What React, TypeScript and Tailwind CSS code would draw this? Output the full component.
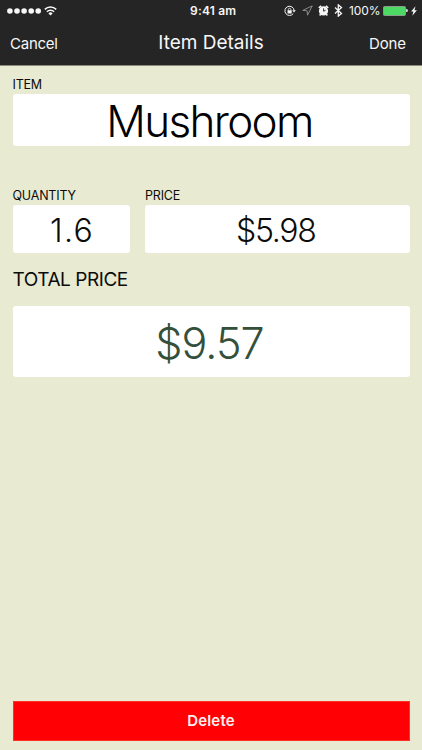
import React from 'react';

type FieldProps = {
  label: string;
  value: string;
  className?: string;
  boxClassName: string;
};

const Field: React.FC<FieldProps> = ({ label, value, className = '', boxClassName }) => {
  return (
    <div className={className}>
      <div className="pt-px pb-px text-[12.5px] leading-4 tracking-[-0.2px]">{label}</div>
      <div className={`flex items-center justify-center rounded-[3px] bg-white font-light ${boxClassName}`}>
        <span>{value}</span>
      </div>
    </div>
  );
};

const StatusBar: React.FC = () => {
  return (
    <div className="relative flex h-[21px] items-center justify-between pl-[7px] pr-[5px]">
      {/* Signal and wifi */}
      <div className="flex items-center">
        <svg width="34" height="6" viewBox="0 0 34 6" fill="currentColor">
          <circle cx="2.9" cy="3" r="2.8" />
          <circle cx="10" cy="3" r="2.8" />
          <circle cx="17.1" cy="3" r="2.8" />
          <circle cx="24.2" cy="3" r="2.8" />
          <circle cx="31.2" cy="3" r="2.8" />
        </svg>
        <svg className="ml-[3px]" width="13" height="10" viewBox="0 0 13 10" fill="none" stroke="currentColor">
          <path d="M.8 3.4a8.1 8.1 0 0 1 11.4 0" strokeWidth="1.6" />
          <path d="M2.9 5.7a5.1 5.1 0 0 1 7.2 0" strokeWidth="1.6" />
          <path d="M6.5 9.6 4.4 7.4a2.9 2.9 0 0 1 4.2 0Z" fill="currentColor" stroke="none" />
        </svg>
      </div>

      <span className="absolute left-[190px] top-[3px] whitespace-nowrap text-[12px] font-semibold leading-4 tracking-[0.2px]">
        9:41 am
      </span>

      <div className="flex items-center">
        {/* Rotation lock */}
        <svg width="12" height="12" viewBox="0 0 12 12" fill="none" stroke="currentColor">
          <path d="M9.2 8.6a4.6 4.6 0 1 1 .9-3.2" strokeWidth="1" />
          <path d="m8.2 5.2 1.8 2.2 1.8-2.2Z" fill="currentColor" stroke="none" />
          <rect x="3.5" y="5.3" width="4.2" height="3.2" rx=".3" fill="currentColor" stroke="none" />
          <path d="M4.3 5.5V4.6a1.3 1.3 0 0 1 2.6 0v.9" strokeWidth=".8" />
        </svg>
        {/* Location */}
        <svg className="ml-[6px]" width="11" height="11" viewBox="0 0 10 10" fill="none" stroke="#999" strokeWidth=".8">
          <path d="M9.3.8.7 4.9l4 .4.3 4Z" />
        </svg>
        {/* Alarm */}
        <svg className="ml-[5px]" width="11" height="11" viewBox="0 0 11 11">
          <circle cx="5.5" cy="5.9" r="4.6" fill="currentColor" />
          <path d="M.8 2.9 3.2.9M10.2 2.9 7.8.9M2.6 9.2l-.9 1.2M8.4 9.2l.9 1.2" stroke="currentColor" strokeWidth="1.6" />
          <path d="M5.6 3.3v2.9l2-.9" fill="none" stroke="#252525" strokeWidth=".9" />
        </svg>
        {/* Bluetooth */}
        <svg className="ml-[5px]" width="9" height="13" viewBox="0 0 9 13" fill="none" stroke="currentColor" strokeWidth="1.3">
          <path d="m1 3.6 6.5 5.8-3.2 2.7V.9l3.2 2.7L1 9.4" />
        </svg>
        <span className="ml-[6px] w-[34px] whitespace-nowrap text-[12px] leading-4 tracking-[-0.1px]">100%</span>
        {/* Battery */}
        <div className="h-[10px] w-[23px] rounded-[1.5px] border border-[#8b9b8d] bg-[#4cd964]" />
        <div className="h-[3px] w-[2px] rounded-r-full bg-gray-300" />
        <svg className="ml-[3px]" width="6" height="10" viewBox="0 0 6 10" fill="currentColor">
          <path d="M4.5.3.1 5.5h2.3L1.3 9.7 5.9 4.2H3.5Z" />
        </svg>
      </div>
    </div>
  );
};

const App: React.FC = () => {
  return (
    <div className="flex h-[750px] w-[422px] flex-col overflow-hidden bg-[#e8ead2] font-['Inter',sans-serif] text-[#0c0c0a]">
      <header className="h-[66px] flex-none border-b border-[#8a8a80] bg-[#252525] text-[#f7f7f7]">
        <StatusBar />
        {/* Navbar */}
        <nav className="grid h-[44px] grid-cols-[1fr_auto_1fr] items-center pl-[10px] pr-[16px]">
          <button className="pt-[2px] text-left text-[15px] tracking-[-0.25px]">Cancel</button>
          <h1 className="pl-[6px] text-[19px] leading-6">Item Details</h1>
          <button className="pt-[2px] text-right text-[15px] tracking-[-0.1px]">Done</button>
        </nav>
      </header>

      <main className="flex flex-1 flex-col px-[12.5px] pb-[9.5px] pt-[10px]">
        <Field
          label="ITEM"
          value="Mushroom"
          boxClassName="h-[52px] pt-[3px] pr-[3px] text-[44px] leading-[49px] tracking-[-1.65px] text-black"
        />
        <div className="mt-[41px] flex gap-[15.5px]">
          <Field
            label="QUANTITY"
            value="1.6"
            className="w-[117px]"
            boxClassName="h-[48px] pt-[4px] pl-[2px] text-[32px] leading-[44px] tracking-[1.3px]"
          />
          <Field
            label="PRICE"
            value="$5.98"
            className="flex-1"
            boxClassName="h-[48px] pt-[4px] pr-[3px] text-[32px] leading-[44px] tracking-[-1.3px]"
          />
        </div>

        <h2 className="mt-[15px] text-[19px] leading-6 tracking-[-0.45px]">TOTAL PRICE</h2>
        <div className="mt-[14px] flex h-[71px] items-center justify-center rounded-[3px] bg-white pt-[3px] pr-[3px] text-[43px] font-light leading-[68px] tracking-[-0.9px] text-[#35503a]">
          <span>$9.57</span>
        </div>

        <button className="mt-auto h-[40px] border border-[#ff3026] bg-[#ff0004] pt-[2px] text-[15px] font-semibold tracking-[0.2px] text-[#ffeeee]">
          Delete
        </button>
      </main>
    </div>
  );
};

export default App;
